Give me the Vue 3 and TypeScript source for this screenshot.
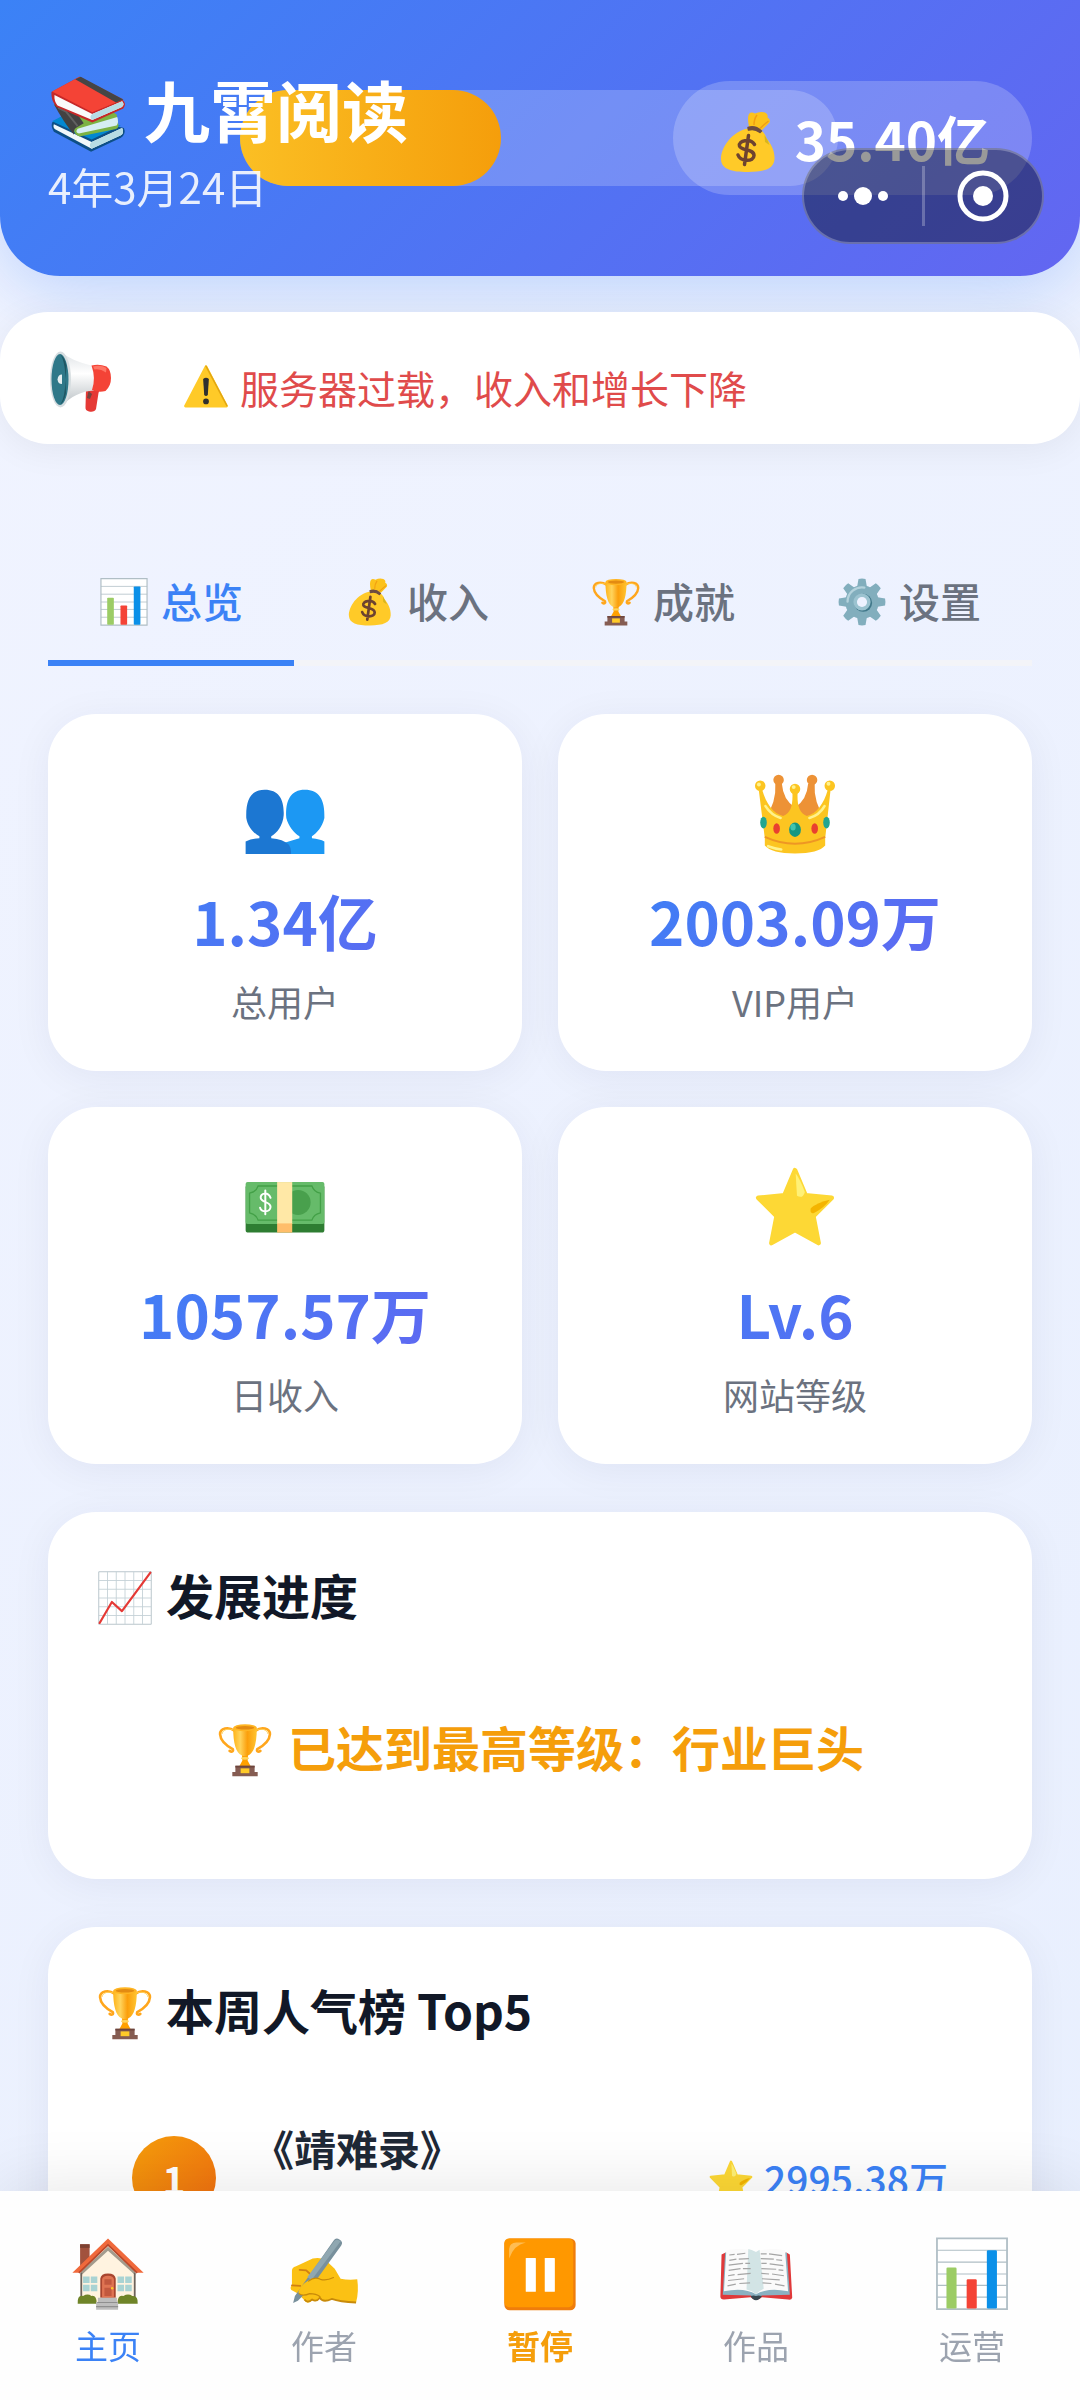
<script setup lang="ts">
import { ref } from 'vue'

interface Entry {
  icon: string
  label: string
}
interface Stat extends Entry {
  value: string
}

const tabs: Entry[] = [
  { icon: 'chart', label: '总览' },
  { icon: 'bag', label: '收入' },
  { icon: 'trophy', label: '成就' },
  { icon: 'gear', label: '设置' },
]
const stats: Stat[] = [
  { icon: 'users', value: '1.34亿', label: '总用户' },
  { icon: 'crown', value: '2003.09万', label: 'VIP用户' },
  { icon: 'cash', value: '1057.57万', label: '日收入' },
  { icon: 'star', value: 'Lv.6', label: '网站等级' },
]
const nav: Entry[] = [
  { icon: 'house', label: '主页' },
  { icon: 'write', label: '作者' },
  { icon: 'pause', label: '暂停' },
  { icon: 'book', label: '作品' },
  { icon: 'chart', label: '运营' },
]
const ranking = [{ title: '《靖难录》', score: '2995.38万' }]

const activeTab = ref('总览')
const activeNav = ref('主页')
const levelFill = ref(43.6)
</script>

<template>
  <div class="app">
    <svg class="sprite" aria-hidden="true">
      <defs>
        <linearGradient id="g-gold" x1="0" x2="1" y1="0" y2="0">
          <stop offset="0" stop-color="#ffb319" /><stop offset=".3" stop-color="#ffd45c" />
          <stop offset=".6" stop-color="#fb9f0c" /><stop offset="1" stop-color="#ffc531" />
        </linearGradient>
        <linearGradient id="g-cone" x1="0" x2="0" y1="0" y2="1">
          <stop offset="0" stop-color="#dfe3e6" /><stop offset=".4" stop-color="#ffffff" /><stop offset="1" stop-color="#b9c0c4" />
        </linearGradient>
      </defs>

      <symbol id="i-books" viewBox="0 0 128 128">
        <path d="M5 78 28 64 123 87Q127 97 118 103L69 126 8 93Q3 86 5 78Z" fill="#0d4f86" />
        <path d="M5 76 30 63 118 83 70 106Z" fill="#0288d1" />
        <path d="M8 81 70 110 120 87Q124 95 118 99L70 121 10 89Q6 86 8 81Z" fill="#f1f8fa" />
        <path d="M70 110 120 87Q124 95 118 99L70 121Q64 115 70 110Z" fill="#b7dce4" />
        <path d="M8 49 100 58 111 65 114 83Q114 88 108 89L50 101Q40 97 41 88Z" fill="#7cb342" />
        <path d="M47 88 112 69Q115 77 111 83L49 96Q42 94 47 88Z" fill="#d6eef2" />
        <path d="M8 48 42 58 57 79 44 87Q40 90 41 98 25 79 8 48Z" fill="#424242" />
        <path d="M15 54 28 60 47 84" fill="none" stroke="#616161" stroke-width="3" />
        <path d="M4 28 50 3 120 40Q128 46 122 55L71 78 12 52Q3 42 4 28Z" fill="#c62828" />
        <path d="M5 27 50 3 122 40 71 61Z" fill="#f44336" />
        <path d="M43 7 52 3 122 40 110 45Z" fill="#454545" />
        <path d="M9 33 71 64 120 43Q125 49 119 53L71 74 14 50Q8 43 9 33Z" fill="#fafafa" />
        <path d="M71 64 120 43Q125 49 119 53L71 74Q65 69 71 64Z" fill="#b7dce4" />
      </symbol>

      <symbol id="i-bag" viewBox="0 0 128 128">
        <path d="M66 34Q62 14 66 8 70 3 78 7 88 2 98 5 105 8 103 15 110 19 107 25L92 40Z" fill="#fcc21b" />
        <path d="M76 30Q76 18 82 10M88 37Q95 30 105 22" fill="none" stroke="#f19f12" stroke-width="3" />
        <path d="M65 37C86 33 98 44 101 57 108 65 118 80 117 98 116 117 98 124 64 124S11 118 10 99C9 77 31 42 65 37Z" fill="#ffca28" />
        <path d="M97 50Q104 60 107 70L98 64Z" fill="#d9b51d" />
        <path d="M64 35Q78 30 91 42L88 45Q77 36 65 40Z" fill="#6d4c41" stroke="#6d4c41" stroke-width="3" stroke-linejoin="round" />
        <path d="M77 69C69 56 44 61 47 72 50 82 76 77 76 91 76 104 49 104 44 90M65 51 57 109" fill="none" stroke="#6d4330" stroke-width="7" stroke-linecap="round" />
      </symbol>

      <symbol id="i-mega" viewBox="0 0 128 128">
        <path d="M74 78 97 76Q102 79 99 86L94 118Q91 125 80 123 72 121 73 114Z" fill="#e53935" />
        <path d="M79 82 86 88 82 98 76 96Z" fill="#78433f" />
        <path d="M24 4Q45 22 88 32L90 81Q52 83 26 112Z" fill="url(#g-cone)" />
        <path d="M85 31Q100 27 115 33 124 40 124 56T113 82Q99 86 86 80 94 56 85 31Z" fill="#f44336" />
        <path d="M88 33Q104 29 115 36L114 45Q102 37 91 39Z" fill="#ff7565" />
        <ellipse cx="23" cy="59" rx="21" ry="56" fill="#d6dde0" />
        <ellipse cx="22" cy="59" rx="17" ry="51" fill="#2f7889" />
        <path d="M22 8Q31 14 35 32L33 59 34 86Q30 104 23 109 32 95 33 59 32 20 22 8Z" fill="#1f5663" />
        <path d="M26 49Q18 49 17 59 18 68 26 68Z" fill="#e5eef0" />
      </symbol>

      <symbol id="i-warn" viewBox="0 0 128 128">
        <path d="M64 8 121 117H7Z" fill="#ffca28" stroke="#ffca28" stroke-width="8" stroke-linejoin="round" />
        <path d="M64 6 122 116" stroke="#e2a610" stroke-width="4" stroke-linecap="round" />
        <path d="M56 42Q64 34 72 42L69 86Q64 92 59 86Z" fill="#2f2f2f" />
        <circle cx="64" cy="104" r="8" fill="#2f2f2f" />
      </symbol>

      <symbol id="i-chart" viewBox="0 0 128 128">
        <path d="M5 4H123V123H5Z" fill="#fff" />
        <path d="M5 24H123M5 44H123M5 64H123M5 83H123M5 103H123" stroke="#b0bec5" stroke-width="2" />
        <path d="M5 4H123V123H5Z" fill="none" stroke="#b0bec5" stroke-width="3" />
        <rect x="21" y="53" width="17" height="69" rx="2" fill="#9ccc65" />
        <rect x="55" y="73" width="17" height="49" rx="2" fill="#f44336" />
        <rect x="89" y="24" width="17" height="98" rx="2" fill="#0b90e8" />
      </symbol>

      <symbol id="i-trophy" viewBox="0 0 128 128">
        <path d="M40 20C26 10 7 14 7 28 8 45 25 56 36 62 38 67 34 70 29 66M88 20C102 10 121 14 121 28 120 45 103 56 92 62 90 67 94 70 99 66" fill="none" stroke="#ffa61c" stroke-width="6" stroke-linecap="round" />
        <path d="M41 20C29 13 12 17 12 27M87 20C99 13 116 17 116 27" fill="none" stroke="#ffcf4d" stroke-width="2" />
        <path d="M57 74H71L70 88 77 101H51L58 88Z" fill="#ffa000" />
        <path d="M37 13C37 48 43 70 56 76 60 79 68 79 72 76 85 70 91 48 91 13Z" fill="url(#g-gold)" />
        <ellipse cx="64" cy="13" rx="27" ry="8" fill="#ffb522" />
        <ellipse cx="64" cy="13" rx="21" ry="4" fill="#e38b12" />
        <ellipse cx="64" cy="83" rx="9" ry="3" fill="#ffd45c" />
        <path d="M42 100H86V114H93V124H35V114H42Z" fill="#855c52" />
        <path d="M42 100H86V104H42Z" fill="#6d453d" />
        <rect x="54" y="106" width="20" height="11" fill="#ffca28" />
      </symbol>

      <symbol id="i-gear" viewBox="0 0 128 128">
        <g fill="#82aebd">
          <circle cx="64" cy="64" r="43" />
          <path id="tooth" d="M55 5Q64 3 73 5L77 28H51ZM55 123Q64 125 73 123L77 100H51Z" />
          <use href="#tooth" transform="rotate(45 64 64)" /><use href="#tooth" transform="rotate(90 64 64)" /><use href="#tooth" transform="rotate(135 64 64)" />
        </g>
        <path d="M27 63A37 37 0 0 1 70 27" fill="none" stroke="#b4d2dc" stroke-width="6" stroke-linecap="round" />
        <circle cx="67" cy="66" r="23" fill="#41788a" />
        <circle cx="64" cy="64" r="22" fill="#9cc3d0" />
        <circle cx="64" cy="64" r="13" fill="#eef2ff" />
      </symbol>

      <symbol id="i-users" viewBox="0 0 128 128">
        <path d="M94 27C116 27 125 42 124 70 121 84 112 93 105 98V101Q117 102 124 106V125H62V108L86 101V98C78 93 69 82 66 70 64 43 73 27 94 27Z" fill="#1c98f3" />
        <path d="M33 27C55 27 63 42 62 66 61 82 51 94 43 98V101Q61 102 70 111 74 117 73 125H4V106Q13 101 25 101V98C16 93 7 83 5 70 4 43 12 27 33 27Z" fill="#1c77d2" />
      </symbol>

      <symbol id="i-crown" viewBox="0 0 128 128">
        <g fill="#ed9236">
          <path d="M34 18H44Q46 43 64 54V72H18Q36 46 34 18ZM94 18H84Q82 43 64 54V72H110Q92 46 94 18Z" />
          <circle cx="39" cy="12" r="8" /><circle cx="90" cy="12" r="8" />
        </g>
        <path d="M14 27C20 48 31 64 46 67 58 63 61 49 60 31H68C67 49 70 63 82 67 97 64 108 48 114 27L118 29 110 101V112Q100 124 64 124T18 112V101L9 29Z" fill="#fcc521" />
        <circle cx="11" cy="21" r="8" fill="#fcc521" /><circle cx="117" cy="21" r="8" fill="#fcc521" /><circle cx="64" cy="26" r="8" fill="#fcc521" />
        <path d="M19 52Q28 66 42 70M86 70Q101 66 109 52M23 113Q34 117 43 118" fill="none" stroke="#fff28c" stroke-width="4" stroke-linecap="round" />
        <path d="M18 99Q64 120 110 99" fill="none" stroke="#ee9624" stroke-width="3" />
        <circle cx="9" cy="19" r="3" fill="#fff28c" /><circle cx="62" cy="23" r="3" fill="#fff28c" /><circle cx="115" cy="18" r="3" fill="#fff28c" />
        <ellipse cx="64" cy="88" rx="9" ry="11" fill="#149782" />
        <ellipse cx="61" cy="84" rx="4" ry="5" fill="#40c4ae" />
        <ellipse cx="36" cy="86" rx="5" ry="8" fill="#e9402f" /><ellipse cx="94" cy="86" rx="5" ry="8" fill="#e9402f" />
        <ellipse cx="16" cy="77" rx="5" ry="9" fill="#22a58f" /><ellipse cx="112" cy="77" rx="5" ry="9" fill="#22a58f" />
      </symbol>

      <symbol id="i-cash" viewBox="0 0 128 128">
        <rect x="4" y="30" width="120" height="73" rx="4" fill="#2e7d32" />
        <rect x="4" y="26" width="120" height="64" rx="3" fill="#66bb6a" />
        <path d="M23 32H105Q108 41 118 43V73Q108 75 105 84H23Q20 75 10 73V43Q20 41 23 32Z" fill="none" stroke="#43a047" stroke-width="2" />
        <circle cx="84" cy="57" r="19" fill="#49a04d" />
        <rect x="52" y="26" width="23" height="64" fill="#ffe8a6" /><rect x="52" y="89" width="23" height="14" fill="#ffbe6a" />
        <path d="M42 50C38 40 26 43 27 50 28 58 42 55 42 64 41 73 28 72 26 65M34 39V75" fill="none" stroke="#fff" stroke-width="3" stroke-linecap="round" />
      </symbol>

      <symbol id="i-star" viewBox="0 0 128 128">
        <path d="M64 8 80 46 120 50 92 78 100 119 64 99 28 119 36 78 8 50 48 46Z" fill="#fdd835" stroke="#fdd835" stroke-width="7" stroke-linejoin="round" />
        <path d="M65 13Q71 20 79 41 76 52 67 47Z" fill="#fff176" />
        <path d="M117 53Q98 57 88 66 86 75 93 73 108 66 117 53Z" fill="#f4b400" />
      </symbol>

      <symbol id="i-trend" viewBox="0 0 128 128">
        <path d="M4 4H124V124H4Z" fill="#fff" stroke="#b0bec5" stroke-width="2" />
        <path d="M24 4V124M44 4V124M64 4V124M84 4V124M104 4V124M4 24H124M4 44H124M4 64H124M4 84H124M4 104H124" stroke="#c3d0d6" stroke-width="2" />
        <path d="M6 121 34 73 57 94 122 6" fill="none" stroke="#e53935" stroke-width="5" stroke-linecap="round" stroke-linejoin="round" />
      </symbol>

      <symbol id="i-house" viewBox="0 0 128 128">
        <path d="M17 14H33V45L17 60Z" fill="#a2523d" /><path d="M17 14H33V20H17Z" fill="#7d4132" />
        <path d="M18 56 64 14 110 56V112H18Z" fill="#fff3e0" />
        <path d="M18 60 64 18 110 60V66L64 25 18 67Z" fill="#a39b8d" />
        <path d="M19 62V104M109 62V104" stroke="#6d625b" stroke-width="3" />
        <path d="M4 62 64 4 124 62H113L64 16 15 62Z" fill="#f0693b" />
        <path d="M15 62 64 15 113 62" fill="none" stroke="#b9482b" stroke-width="3" />
        <path d="M22 68H33V79H22ZM35 68H46V79H35ZM22 82H33V93H22ZM35 82H46V93H35ZM80 68H91V79H80ZM93 68H104V79H93ZM80 82H91V93H80ZM93 82H104V93H93Z" fill="#a9d3d3" />
        <path d="M51 104V72Q52 63 64 63T77 72V104Z" fill="#a8452f" />
        <path d="M54 104V73Q55 67 64 67T74 73V104Z" fill="#df7453" />
        <path d="M58 73H70V82H58ZM58 87H70V101H58Z" fill="#c2583e" /><circle cx="71" cy="88" r="2" fill="#ffca28" />
        <path d="M13 114Q12 99 22 101 30 96 36 101 45 99 45 114ZM80 114Q80 98 90 101 98 96 105 101 115 100 114 114Z" fill="#6f8428" />
        <path d="M47 104H79V111H81V124H44V111H47Z" fill="#bdbdbd" /><path d="M46 112H80M44 119H81" stroke="#8f8f8f" stroke-width="2" />
      </symbol>

      <symbol id="i-write" viewBox="0 0 128 128">
        <path d="M10 61Q9 53 17 51L45 38Q56 35 66 40L82 55 92 72Q106 75 120 73 123 94 118 112 90 111 77 106 62 113 57 104 51 113 44 108 36 117 31 108L20 97 9 91Q6 87 10 83Z" fill="#fbc114" />
        <path d="M118 112Q90 111 77 106 62 113 57 104 51 112 44 107 36 114 31 107" fill="none" stroke="#c88a0a" stroke-width="3" />
        <path d="M23 57 34 58 44 67M10 83 24 84" fill="none" stroke="#d07f12" stroke-width="3" stroke-linecap="round" />
        <path d="M80 8Q84 2 90 6 97 10 93 16L41 88 20 109 12 113 15 101Z" fill="#78909c" />
        <path d="M82 8Q86 4 92 9L43 74 36 69Z" fill="#8fa7b1" />
        <path d="M80 69Q68 76 57 73 48 68 39 74 24 83 21 94 21 101 32 99 48 96 57 101L80 104Z" fill="#fbc114" />
        <path d="M80 70Q68 76 58 73 48 68 38 76M22 97Q28 102 40 97 51 97 57 102" fill="none" stroke="#c88a0a" stroke-width="2" stroke-linecap="round" />
      </symbol>

      <symbol id="i-pause" viewBox="0 0 128 128">
        <rect x="4" y="4" width="120" height="121" rx="9" fill="#ef7d0b" />
        <rect x="4" y="4" width="116" height="116" rx="8" fill="#ff9800" />
        <path d="M12 38V22Q13 11 24 11H40Q20 15 12 38Z" fill="#ffbd52" />
        <rect x="40" y="37" width="17" height="57" rx="1" fill="#fff" /><rect x="72" y="37" width="17" height="57" rx="1" fill="#fff" />
      </symbol>

      <symbol id="i-book" viewBox="0 0 128 128">
        <path d="M6 31 12 28H116L121 31 125 104Q124 108 118 107L74 103Q64 112 55 103L10 107Q4 107 4 102Z" fill="#e0393a" />
        <path d="M12 28H116L121 99 74 100Q64 108 55 100L8 99Z" fill="#8bb1c1" />
        <path d="M14 24Q45 19 64 27 83 19 113 24L118 93Q84 86 64 98 44 86 10 93Z" fill="#fafafa" />
        <path d="M64 27Q56 23 51 22L48 90Q58 92 64 98 70 92 77 89L70 23Z" fill="#d2e4e5" />
        <path d="M55 101Q60 99 64 101 68 99 74 101 70 108 64 108 58 108 55 101Z" fill="#37474f" />
        <path d="M19 32 28 31M32 31 46 29M19 41 31 39M35 39 52 38M18 49 42 46M46 46H54M18 58 38 55M42 55H55M17 67 28 65M33 65 55 63M17 75 44 72M16 84 30 81M36 80 54 79M72 30H82M86 30 108 33M72 38 94 39M98 40 108 41M73 46H82M87 47 110 50M73 55 98 56M102 57 110 58M73 63 86 64M91 64 111 67M74 72 104 74M75 79 90 80M96 81 112 84" stroke="#a5a5a5" stroke-width="2" />
      </symbol>
    </svg>

    <header class="hero">
      <div class="level-bar" role="progressbar" :aria-valuenow="levelFill">
        <div class="level-fill" :style="{ width: levelFill + '%' }"></div>
      </div>
      <div class="brand">
        <h1 class="title"><svg class="icon icon-title" aria-hidden="true"><use href="#i-books" /></svg>九霄阅读</h1>
        <p class="date">4年3月24日</p>
      </div>
      <div class="coins"><svg class="icon icon-coins" aria-hidden="true"><use href="#i-bag" /></svg>35.40亿</div>
      <div class="capsule">
        <button type="button" aria-label="更多">
          <svg class="capsule-icon" viewBox="0 0 60 60"><circle cx="10" cy="30" r="5" /><circle cx="30" cy="30" r="9" /><circle cx="50" cy="30" r="5" /></svg>
        </button>
        <span class="capsule-line"></span>
        <button type="button" aria-label="关闭">
          <svg class="capsule-icon" viewBox="0 0 60 60"><circle class="ring" cx="30" cy="30" r="23" /><circle cx="30" cy="30" r="10" /></svg>
        </button>
      </div>
    </header>

    <section class="notice">
      <svg class="icon icon-mega" aria-hidden="true"><use href="#i-mega" /></svg>
      <p><svg class="icon icon-warn" aria-hidden="true"><use href="#i-warn" /></svg>服务器过载，收入和增长下降</p>
    </section>

    <main class="content">
      <div class="tabs" role="tablist">
        <button
          v-for="tab in tabs"
          :key="tab.label"
          type="button"
          role="tab"
          class="tab"
          :class="{ active: activeTab === tab.label }"
          :aria-selected="activeTab === tab.label"
          @click="activeTab = tab.label"
        >
          <svg class="icon icon-tab" aria-hidden="true"><use :href="'#i-' + tab.icon" /></svg>{{ tab.label }}
        </button>
      </div>

      <section class="stats">
        <article v-for="s in stats" :key="s.label" class="card stat">
          <svg class="icon icon-stat" aria-hidden="true"><use :href="'#i-' + s.icon" /></svg>
          <strong class="value">{{ s.value }}</strong>
          <span class="label">{{ s.label }}</span>
        </article>
      </section>

      <section class="card panel">
        <h2 class="heading"><svg class="icon icon-heading" aria-hidden="true"><use href="#i-trend" /></svg>发展进度</h2>
        <p class="reached"><svg class="icon icon-heading" aria-hidden="true"><use href="#i-trophy" /></svg>已达到最高等级：行业巨头</p>
      </section>

      <section class="card panel">
        <h2 class="heading"><svg class="icon icon-heading" aria-hidden="true"><use href="#i-trophy" /></svg>本周人气榜 Top5</h2>
        <ol class="ranking">
          <li v-for="(r, i) in ranking" :key="r.title">
            <span class="medal">{{ i + 1 }}</span>
            <span class="name">{{ r.title }}</span>
            <span class="score"><svg class="icon icon-score" aria-hidden="true"><use href="#i-star" /></svg>{{ r.score }}</span>
          </li>
        </ol>
      </section>
    </main>

    <nav class="bottom">
      <button
        v-for="n in nav"
        :key="n.label"
        type="button"
        :class="{ active: activeNav === n.label, paused: n.icon === 'pause' }"
        @click="activeNav = n.label"
      >
        <svg class="icon icon-nav" aria-hidden="true"><use :href="'#i-' + n.icon" /></svg>
        <span>{{ n.label }}</span>
      </button>
    </nav>
  </div>
</template>

<style>
body {
  margin: 0;
}
</style>

<style scoped>
.app {
  min-height: 100vh;
  background: linear-gradient(135deg, #f1f4ff 0%, #e8effe 100%);
  font-family: 'Noto Sans CJK SC', 'Noto Sans', sans-serif;
  color: #111827;
}
.app * {
  box-sizing: border-box;
}
.sprite {
  position: absolute;
  width: 0;
  height: 0;
}
.icon {
  flex: none;
  display: block;
}
h1,
h2,
p,
ol {
  margin: 0;
  padding: 0;
}
button {
  border: 0;
  padding: 0;
  background: none;
  font-family: inherit;
  cursor: pointer;
}

/* Header */
.hero {
  position: relative;
  display: flex;
  align-items: center;
  justify-content: space-between;
  padding: 60px 48px;
  border-radius: 0 0 60px 60px;
  background: linear-gradient(135deg, #3b82f6, #6366f1);
  box-shadow: 0 12px 72px rgba(59, 130, 246, 0.3);
  color: #fff;
}
.level-bar {
  position: absolute;
  top: 90px;
  left: 240px;
  right: 242px;
  height: 96px;
  border-radius: 48px;
  background: rgba(255, 255, 255, 0.2);
}
.level-fill {
  height: 100%;
  border-radius: 48px;
  background: linear-gradient(90deg, #fbbf24, #f59e0b);
}
.brand,
.coins {
  position: relative;
}
.title {
  display: flex;
  align-items: center;
  gap: 16px;
  font-size: 66px;
  line-height: 96px;
  font-weight: 700;
}
.icon-title {
  width: 80px;
  height: 78px;
  margin-top: 12px;
}
.date {
  font-size: 42px;
  line-height: 60px;
  opacity: 0.88;
}
.coins {
  display: flex;
  align-items: center;
  gap: 14px;
  padding: 0 42px;
  border-radius: 57px;
  background: rgba(255, 255, 255, 0.2);
  font-size: 53px;
  line-height: 114px;
  font-weight: 700;
}
.icon-coins {
  width: 66px;
  height: 64px;
  margin-top: 8px;
}
.capsule {
  position: absolute;
  top: 148px;
  right: 36px;
  width: 242px;
  height: 96px;
  display: flex;
  align-items: center;
  border: 2px solid rgba(255, 255, 255, 0.25);
  border-radius: 48px;
  background: rgba(0, 0, 0, 0.4);
}
.capsule button {
  flex: 1;
  display: flex;
  justify-content: center;
}
.capsule-icon {
  width: 60px;
  height: 60px;
  fill: #fff;
}
.ring {
  fill: none;
  stroke: #fff;
  stroke-width: 5;
}
.capsule-line {
  width: 3px;
  height: 60px;
  background: rgba(255, 255, 255, 0.25);
}

/* Notice */
.notice {
  position: relative;
  display: flex;
  align-items: center;
  gap: 68px;
  margin-top: 36px;
  padding: 0 48px;
  height: 132px;
  border-radius: 48px;
  background: #fff;
  box-shadow: 0 6px 36px rgba(0, 0, 0, 0.06);
}
.notice p {
  display: flex;
  align-items: center;
  gap: 10px;
  padding-top: 18px;
  font-size: 39px;
  line-height: 60px;
  color: #e04b4b;
}
.icon-mega {
  width: 66px;
  height: 64px;
  margin-top: 8px;
}
.icon-warn {
  width: 48px;
  height: 46px;
}

/* Tabs */
.content {
  padding: 96px 48px 0;
}
.tabs {
  display: flex;
  margin-bottom: 48px;
}
.tab {
  flex: 1;
  display: flex;
  align-items: center;
  justify-content: center;
  gap: 12px;
  padding: 33px 0;
  border-bottom: 6px solid #f3f4f8;
  font-size: 41px;
  line-height: 54px;
  font-weight: 500;
  color: #6b7280;
}
.tab.active {
  border-color: #3b82f6;
  color: #3b82f6;
}
.icon-tab {
  width: 50px;
  height: 50px;
  margin-top: 4px;
}

/* Cards */
.card {
  border-radius: 48px;
  background: #fff;
  box-shadow: 0 6px 42px rgba(20, 25, 60, 0.06);
}
.stats {
  display: grid;
  grid-template-columns: 1fr 1fr;
  gap: 36px;
}
.stat {
  display: flex;
  flex-direction: column;
  align-items: center;
  padding: 58px 48px 43px;
}
.icon-stat {
  width: 84px;
  height: 84px;
}
.value {
  align-self: stretch;
  margin-top: 20px;
  font-size: 60px;
  line-height: 87px;
  font-weight: 700;
  text-align: center;
  background: linear-gradient(135deg, #3b82f6, #6366f1);
  background-clip: text;
  -webkit-background-clip: text;
  color: transparent;
}
.label {
  margin-top: 11px;
  font-size: 36px;
  line-height: 54px;
  color: #6b7280;
}
.panel {
  margin-top: 48px;
  padding: 48px;
}
.heading {
  display: flex;
  align-items: center;
  gap: 12px;
  margin-bottom: 42px;
  font-size: 48px;
  line-height: 68px;
  font-weight: 600;
}
.icon-heading {
  width: 58px;
  height: 56px;
  margin-top: 8px;
}
.reached {
  display: flex;
  align-items: center;
  justify-content: center;
  gap: 14px;
  padding: 42px 0 51px;
  font-size: 48px;
  line-height: 68px;
  font-weight: 600;
  color: #f59e0b;
}

/* Ranking */
.ranking {
  list-style: none;
}
.ranking li {
  display: flex;
  align-items: center;
  gap: 36px;
  min-height: 186px;
  padding: 36px;
}
.medal {
  width: 84px;
  border-radius: 50%;
  background: linear-gradient(135deg, #f59e0b, #f06a10);
  color: #fff;
  font-size: 39px;
  line-height: 84px;
  font-weight: 700;
  text-align: center;
}
.name {
  align-self: flex-start;
  flex: 1;
  font-size: 42px;
  line-height: 54px;
  font-weight: 600;
  color: #1f2937;
}
.score {
  display: flex;
  align-items: center;
  gap: 10px;
  font-size: 39px;
  line-height: 54px;
  font-weight: 500;
  color: #3b82f6;
}
.icon-score {
  width: 46px;
  height: 46px;
  margin-top: 8px;
}

/* Bottom navigation */
.bottom {
  position: fixed;
  left: 0;
  right: 0;
  bottom: 0;
  display: flex;
  padding: 45px 0 32px;
  background: #fefefe;
  box-shadow: 0 -6px 60px rgba(0, 0, 0, 0.09);
}
.bottom button {
  flex: 1;
  display: flex;
  flex-direction: column;
  align-items: center;
  gap: 10px;
  font-size: 33px;
  line-height: 46px;
  color: #9ca3af;
}
.bottom .active {
  color: #3b82f6;
}
.bottom .paused {
  color: #f59e0b;
  font-weight: 600;
}
.icon-nav {
  width: 76px;
  height: 76px;
}
</style>
